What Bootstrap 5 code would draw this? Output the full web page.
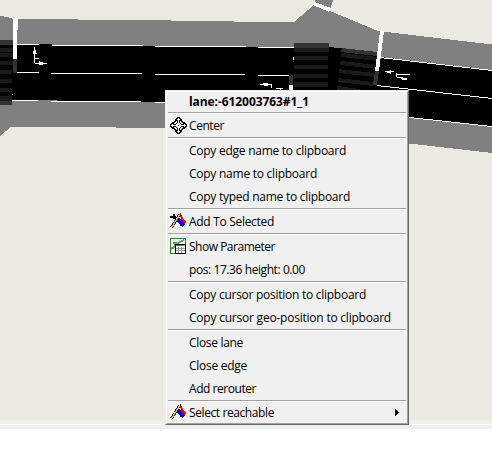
<!DOCTYPE html>
<html lang="en">
<head>
<meta charset="utf-8">
<meta name="viewport" content="width=device-width, initial-scale=1">
<title>Lane context menu</title>
<link href="https://cdn.jsdelivr.net/npm/bootstrap@5.3.0/dist/css/bootstrap.min.css" rel="stylesheet">
<style>
body{font-family:"Open Sans","Noto Sans",sans-serif;background:#fff;color:#000}
.stage{width:492px;height:466px}
.netmap{height:420px;background:#eaeae1}
.statusline{height:9px;background:linear-gradient(#efefef 4px,#fff 4px,#fff 5px,#efefef 5px)}
.ctx{left:165px;top:90px;width:244px;height:335px;background:#f0f0f0;border:1px solid;border-color:#f0f0f0 #696969 #696969 #f0f0f0}
.ctx-in{border:1px solid;border-color:#fff #a0a0a0 #a0a0a0 #fff;padding:0 1px}
.entry{height:23px;font-size:12px;line-height:23px;white-space:nowrap;color:#000;padding-right:7px}
.entry.heading{height:20px;line-height:20px}
.entry.final{height:21px;line-height:21px}
.slot{width:21px;height:18px;padding-left:2px;line-height:0}
.split{height:2px;border-top:1px solid #a0a0a0;border-bottom:1px solid #fff}
</style>
<script src="https://cdn.jsdelivr.net/npm/bootstrap@5.3.0/dist/js/bootstrap.bundle.min.js"></script>
</head>
<body>
<main class="stage position-relative overflow-hidden">
<div class="netmap">
<svg class="d-block" width="492" height="420" shape-rendering="crispEdges">
<path fill="#808080" d="M0 16L8 17 13 19H78V20H160L182 21 285 22H294L315 4V0H333L330 11 378 31 492 44.5V153L405 143 300 130 165 128H116V127H11L0 136Z"/>
<path d="M0 44H52V45H143V46H246V47H330L377 53 381 57 492 70V126.500L405 117 290 103 165 102 113 101 0 100Z"/>
<path fill="#333" d="M0 40H13V45H0ZM0 101H12V105H0ZM13 59H17V73H13ZM294 43H329V48H294ZM289 75H293V85H289ZM342 48L377 52V56L341 52ZM375 71H379L377 85H373Z"/>
<path fill="#1a1a1a" d="M0 48H13V52H0ZM0 53H13V57H0ZM0 61H13V65H0ZM0 70H12V74H0ZM0 79H12V83H0ZM0 88H12V92H0ZM0 96H12V101H0ZM294 48H329V52H294ZM294 56H328V60H294ZM294 65H328V69H294ZM294 74H328V78H294ZM294 82H328V87H294ZM342 53L377 57V61L341 57ZM340 61L376 65V69L340 65ZM339 69L374 73V77L339 73ZM338 78L373 82V86L338 82ZM337 86L360 89V90H337Z"/>
<path fill="none" stroke="#fff" d="M17 44.500H39M52 45.500H143M155 46.500H246M258 47.500H294M17 72.500H39M51 73.500H142M155 74.500H245M258 75.500H289M12 100.500H38M51 101.500H141M155 102.500H165M380 57.500L492 70.500M377 85.500L492 98.500M405 117L492 126.500M293.500 57V60M12.500 94V95"/>
<path fill="#fff" d="M13 18H18V30H17V59H13ZM289 85H293V90H289ZM313 5L315 2 331 8 329 12ZM380 31H384L379 71H375Z"/>
<g fill="none" stroke="#fff"><path d="M34.500 47V63M35 58.500H39M35 63.500H47M260 84.500H271V88M276 88.500H283M385 71.500H394M396.500 73V77M397 74.500H410M397 77.500H401"/></g>
<path fill="#fff" d="M34 48H35L37 54H33ZM39 61L44 63 42 65H39ZM259 85L264 83H268V86ZM385 72L391 70 391 74ZM399 77L407 78V80H403ZM276 88L281 88V90Z"/>
</svg>
</div>
<div class="statusline"></div>

<nav class="ctx position-absolute" aria-label="Lane actions"><div class="ctx-in h-100">
<div class="entry heading d-flex align-items-center fw-bold"><span class="slot"></span><span class="label" data-w="120">lane:-612003763#1_1</span></div>
<div class="split"></div>
<div class="entry d-flex align-items-center"><span class="slot"><svg width="17" height="17" viewBox="0 0 17 17" shape-rendering="crispEdges"><defs><g id="arm"><path d="M7 0h3v1h1v1h1v2h-2v2h-3v-2h-2v-2h1v-1h1z"/><path fill="#fff" d="M8 1h1v5h-1zM7 2h3v1h-3z"/><path d="M4 4h2v1h-1v1h-1zM6 6h1v1h-1z"/></g></defs><use href="#arm"/><use href="#arm" transform="rotate(90 8.5 8.5)"/><use href="#arm" transform="rotate(180 8.5 8.5)"/><use href="#arm" transform="rotate(270 8.5 8.5)"/><path fill="#fff" d="M7 7h3v3h-3z"/><path d="M8 8h1v1h-1z"/></svg></span><span class="label" data-w="35">Center</span></div>
<div class="split"></div>
<div class="entry d-flex align-items-center"><span class="slot"></span><span class="label" data-w="157">Copy edge name to clipboard</span></div>
<div class="entry d-flex align-items-center"><span class="slot"></span><span class="label" data-w="128">Copy name to clipboard</span></div>
<div class="entry d-flex align-items-center"><span class="slot"></span><span class="label" data-w="161">Copy typed name to clipboard</span></div>
<div class="split"></div>
<div class="entry d-flex align-items-center"><span class="slot"><svg width="16" height="16" viewBox="0 0 16 16" shape-rendering="crispEdges"><path fill="none" stroke="#000" stroke-width="2.800" d="M1.500 14.500L10 1"/><path fill="none" stroke="#ffc21f" stroke-width="1.400" d="M1.500 14.500L10 1"/><path fill="#00f" d="M8 5L11 6 15 11 13 14 10 12 7 8Z"/><path fill="#f00" d="M10 2L13 4 14 7 16 9 14 11 12 9Z"/><path d="M10 0h1v2h-1zM11 2h1v1h-1zM10 12h1v1h-1zM12 13h1v1h-1zM14 11h1v1h-1z"/><path d="M0 3.500H6M3.500 1V6" stroke="#000" stroke-width="2"/></svg></span><span class="label" data-w="85">Add To Selected</span></div>
<div class="split"></div>
<div class="entry d-flex align-items-center"><span class="slot"><svg width="16" height="16" viewBox="0 0 16 16" shape-rendering="crispEdges"><path fill="#f0f0f0" stroke="#36863f" d="M.5.5h15v15H.5z"/><path fill="none" stroke="#65a36b" stroke-width="2" d="M1 11L4 9 6 6 8 5 14 2M3 5H7"/><path fill="#fff" stroke="#000" d="M5.500 6.500H15.500V15.500H5.500Z"/><path fill="#777" d="M6 7H15V8H6z"/><path fill="none" stroke="#999" d="M6 10.500H15M6 12.500H15M8.500 9V15M11.500 9V15"/></svg></span><span class="label" data-w="86">Show Parameter</span></div>
<div class="entry d-flex align-items-center"><span class="slot"></span><span class="label" data-w="116">pos: 17.36 height: 0.00</span></div>
<div class="split"></div>
<div class="entry d-flex align-items-center"><span class="slot"></span><span class="label" data-w="177">Copy cursor position to clipboard</span></div>
<div class="entry d-flex align-items-center"><span class="slot"></span><span class="label" data-w="202">Copy cursor geo-position to clipboard</span></div>
<div class="split"></div>
<div class="entry d-flex align-items-center"><span class="slot"></span><span class="label" data-w="54">Close lane</span></div>
<div class="entry d-flex align-items-center"><span class="slot"></span><span class="label" data-w="58">Close edge</span></div>
<div class="entry d-flex align-items-center"><span class="slot"></span><span class="label" data-w="67">Add rerouter</span></div>
<div class="split"></div>
<div class="entry final d-flex align-items-center"><span class="slot"><svg width="16" height="16" viewBox="0 0 16 16" shape-rendering="crispEdges"><path fill="none" stroke="#000" stroke-width="2.800" d="M1.500 14.500L10 1"/><path fill="none" stroke="#ffc21f" stroke-width="1.400" d="M1.500 14.500L10 1"/><path fill="#00f" d="M8 5L11 6 15 11 13 14 10 12 7 8Z"/><path fill="#f00" d="M10 2L13 4 14 7 16 9 14 11 12 9Z"/><path d="M10 0h1v2h-1zM11 2h1v1h-1zM10 12h1v1h-1zM12 13h1v1h-1zM14 11h1v1h-1z"/></svg></span><span class="label" data-w="85">Select reachable</span><svg class="ms-auto" width="4" height="7" shape-rendering="crispEdges"><path d="M0 0L4 3.500 0 7Z"/></svg></div>
</div></nav>
</main>
<script>
document.querySelectorAll('.label').forEach(function(el){
  var n = el.textContent.length, w = el.getBoundingClientRect().width;
  el.style.letterSpacing = ((el.dataset.w - w) / n) + 'px';
});
</script>
</body>
</html>
